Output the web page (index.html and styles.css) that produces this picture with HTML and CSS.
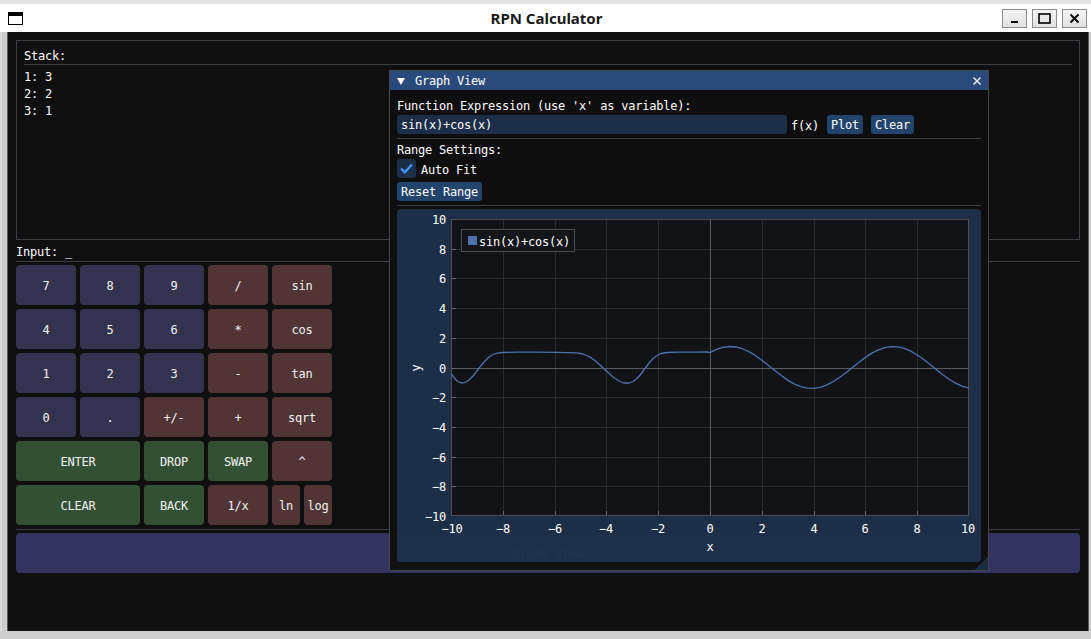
FILE: index.html
```html
<!DOCTYPE html>
<html>
<head>
<meta charset="utf-8">
<title>RPN Calculator</title>
<link rel="stylesheet" href="styles.css">
</head>
<body>
<div class="os-top"></div>
<header class="titlebar">
  <div class="tb-left">
    <svg class="app-icon" width="15" height="13" viewBox="0 0 15 13"><rect x="0.5" y="0.5" width="14" height="12" fill="#fff" stroke="#000"/><rect x="0" y="0" width="15" height="4" fill="#000"/></svg>
  </div>
  <div class="tb-title">RPN Calculator</div>
  <div class="tb-right">
    <span class="wbtn"><svg width="11" height="11" viewBox="0 0 11 11"><rect x="2" y="8" width="7" height="2" fill="#000"/></svg></span>
    <span class="wbtn"><svg width="13" height="11" viewBox="0 0 13 11"><rect x="1" y="1" width="11" height="9" fill="none" stroke="#000" stroke-width="1.6"/></svg></span>
    <span class="wbtn"><svg width="11" height="11" viewBox="0 0 11 11"><path d="M1.5 1.5 L9.5 9.5 M9.5 1.5 L1.5 9.5" stroke="#000" stroke-width="1.8"/></svg></span>
  </div>
</header>
<div class="desk">
  <div class="side-l"></div>
  <main class="app">
    <section class="stack-box">
      <div class="line">Stack:</div>
      <div class="sep sep-stack"></div>
      <div class="line">1: 3</div>
      <div class="line">2: 2</div>
      <div class="line">3: 1</div>
    </section>
    <div class="line input-line">Input: _</div>
    <div class="sep sep-input"></div>
    <div class="keypad">
      <span class="key num">7</span>
      <span class="key num">8</span>
      <span class="key num">9</span>
      <span class="key op">/</span>
      <span class="key op">sin</span>
      <span class="key num">4</span>
      <span class="key num">5</span>
      <span class="key num">6</span>
      <span class="key op">*</span>
      <span class="key op">cos</span>
      <span class="key num">1</span>
      <span class="key num">2</span>
      <span class="key num">3</span>
      <span class="key op">-</span>
      <span class="key op">tan</span>
      <span class="key num">0</span>
      <span class="key num">.</span>
      <span class="key op">+/-</span>
      <span class="key op">+</span>
      <span class="key op">sqrt</span>
      <span class="key cmd wide">ENTER</span>
      <span class="key cmd">DROP</span>
      <span class="key cmd">SWAP</span>
      <span class="key op">^</span>
      <span class="key cmd wide">CLEAR</span>
      <span class="key cmd">BACK</span>
      <span class="key op">1/x</span>
      <span class="key-pair"><span class="key op">ln</span><span class="key op">log</span></span>
    </div>
    <div class="sep sep-keys"></div>
    <div class="graph-btn">Graph View</div>
  </main>
  <div class="side-r"></div>
</div>
<div class="os-bottom"></div>

<div class="gwin">
  <div class="gw-title">
    <svg class="gw-tri" width="8" height="7" viewBox="0 0 8 7"><polygon points="0,0 8,0 4,7" fill="#fff"/></svg>
    <span class="gw-name">Graph View</span>
    <svg class="gw-close" width="8" height="8" viewBox="0 0 8 8"><path d="M0.5 0.5 L7.5 7.5 M7.5 0.5 L0.5 7.5" stroke="#fff" stroke-width="1.2"/></svg>
  </div>
  <div class="gw-body">
    <div class="line">Function Expression (use 'x' as variable):</div>
    <div class="row row-expr">
      <div class="field">sin(x)+cos(x)</div>
      <span class="flabel">f(x)</span>
      <span class="ibtn">Plot</span>
      <span class="ibtn">Clear</span>
    </div>
    <div class="sep sep-a"></div>
    <div class="line">Range Settings:</div>
    <div class="row row-check">
      <span class="check"><svg width="19" height="19" viewBox="0 0 19 19"><path d="M4 9.5 L7.8 13.3 L15 5.5" fill="none" stroke="#4296fa" stroke-width="2.4"/></svg></span>
      <span class="clabel">Auto Fit</span>
    </div>
    <div class="row row-reset"><span class="ibtn">Reset Range</span></div>
    <div class="sep sep-b"></div>
    <div class="plot-frame">
      <svg class="plot" width="584" height="353" viewBox="0 0 584 353">
        <rect x="54" y="10" width="518" height="297" fill="#121316"/>
        <g stroke="#2a2b2f" stroke-width="1">
          <path d="M106.5 10V307 M158.5 10V307 M209.5 10V307 M261.5 10V307 M365.5 10V307 M417.5 10V307 M468.5 10V307 M520.5 10V307"/>
          <path d="M54 40.5H572 M54 69.5H572 M54 99.5H572 M54 129.5H572 M54 188.5H572 M54 218.5H572 M54 248.5H572 M54 277.5H572"/>
        </g>
        <g stroke="#5a5b60" stroke-width="1">
          <path d="M313.5 10V307 M54 159.5H572"/>
        </g>
        <g stroke="#6a6b72" stroke-width="1">
          <path d="M54 10.5h5 M54 40.5h5 M54 69.5h5 M54 99.5h5 M54 129.5h5 M54 159.5h5 M54 188.5h5 M54 218.5h5 M54 248.5h5 M54 277.5h5 M54 306.5h5"/>
          <path d="M54.5 307v-5 M106.5 307v-5 M158.5 307v-5 M209.5 307v-5 M261.5 307v-5 M313.5 307v-5 M365.5 307v-5 M417.5 307v-5 M468.5 307v-5 M520.5 307v-5 M571.5 307v-5"/>
        </g>
        <rect x="54.5" y="10.5" width="517" height="296" fill="none" stroke="#4c4d55"/>
        <path class="curve" d="M54 164.5 L57 168.5 L60 172 L63 173.5 L66 174 L69 173 L72 171 L76 167 L80 162 L84 156.5 L88 152 L92 148 L96 145.5 L100 144.2 L106 143.5 L120 143.2 L140 143.2 L160 143.3 L180 143.8 L186 145 L192 147.5 L198 151.5 L204 157 L210 162.5 L216 168 L222 172 L227 174 L232 174 L236 172.5 L240 169.5 L244 165 L248 159.5 L252 154 L256 149.5 L260 146.5 L264 144.5 L270 143.5 L280 143.2 L300 143.2 L310 143 L313 143.65 L319.48 140.44 L325.95 138.35 L332.43 137.51 L338.9 137.98 L345.38 139.73 L351.85 142.64 L358.33 146.53 L364.8 151.18 L371.28 156.27 L377.75 161.51 L384.23 166.56 L390.7 171.11 L397.18 174.87 L403.65 177.62 L410.13 179.17 L416.6 179.44 L423.08 178.41 L429.55 176.15 L436.03 172.78 L442.5 168.53 L448.98 163.65 L455.45 158.45 L461.93 153.26 L468.4 148.39 L474.88 144.15 L481.35 140.8 L487.83 138.56 L494.3 137.55 L500.78 137.84 L507.25 139.42 L513.73 142.18 L520.2 145.97 L526.68 150.52 L533.15 155.58 L539.63 160.83 L546.1 165.91 L552.58 170.53 L559.05 174.43 L565.53 177.32 L572 179.04"/>
        <rect x="64.5" y="20.5" width="113" height="22" fill="#141518" stroke="#4c4d55"/>
        <rect x="71" y="27" width="9" height="9" fill="#4c72b0"/>
        <text class="lg" x="82" y="37">sin(x)+cos(x)</text>
        <g class="ylab">
          <text x="49" y="15">10</text>
          <text x="49" y="45">8</text>
          <text x="49" y="74">6</text>
          <text x="49" y="104">4</text>
          <text x="49" y="134">2</text>
          <text x="49" y="164">0</text>
          <text x="49" y="193">−2</text>
          <text x="49" y="223">−4</text>
          <text x="49" y="253">−6</text>
          <text x="49" y="282">−8</text>
          <text x="49" y="312">−10</text>
        </g>
        <g class="xlab">
          <text x="55" y="324">−10</text>
          <text x="106" y="324">−8</text>
          <text x="158" y="324">−6</text>
          <text x="209" y="324">−4</text>
          <text x="261" y="324">−2</text>
          <text x="313" y="324">0</text>
          <text x="365" y="324">2</text>
          <text x="417" y="324">4</text>
          <text x="468" y="324">6</text>
          <text x="520" y="324">8</text>
          <text x="571" y="324">10</text>
          <text x="313" y="342">x</text>
        </g>
        <text class="yaxis" transform="translate(23 159) rotate(-90)">y</text>
      </svg>
    </div>
  </div>
  <div class="grip"></div>
</div>
</body>
</html>
```

FILE: styles.css
```css
* { box-sizing: border-box; }

body {
  margin: 0;
  width: 1091px;
  height: 639px;
  overflow: hidden;
  background: #d3d3d3;
  font-family: "DejaVu Sans Mono", "Liberation Mono", monospace;
  font-size: 12px;
  letter-spacing: -0.22px;
  color: #ffffff;
  position: relative;
}

.os-top {
  height: 4px;
  background: #e3e3e3;
}

.titlebar {
  height: 28px;
  background: #ffffff;
  display: grid;
  grid-template-columns: 1fr auto 1fr;
  align-items: center;
  color: #111;
}

.tb-left {
  padding-left: 8px;
  display: flex;
  align-items: center;
}

.app-icon { display: block; margin-top: 1px; }

.tb-title {
  font-family: "Noto Sans", "Open Sans", sans-serif;
  font-weight: 700;
  font-size: 15px;
  letter-spacing: 0;
  color: #1a1a1a;
  padding-left: 2px;
}

.tb-right {
  display: flex;
  justify-content: flex-end;
  gap: 5px;
  padding-right: 4px;
}

.wbtn {
  width: 25px;
  height: 19px;
  border: 1px solid #8c8c8c;
  background: linear-gradient(#f4f4f4, #e0e0e0);
  display: flex;
  align-items: center;
  justify-content: center;
}

.wbtn svg { display: block; }

.desk {
  display: flex;
  height: 599px;
}

.side-l {
  width: 8px;
  background: linear-gradient(90deg, #dcdcdc 0, #dcdcdc 2px, #c9c9c9 2px, #cfcfcf 7px, #5a5a5a 7px);
}

.side-r {
  width: 3px;
  background: linear-gradient(90deg, #5a5a5a 0, #5a5a5a 1px, #cccccc 1px);
}

.app {
  width: 1080px;
  background: #0f0f0f;
  padding: 8px 8px 0 8px;
  display: flex;
  flex-direction: column;
}

.line {
  height: 13px;
  line-height: 16px;
  white-space: pre;
}

.sep {
  height: 1px;
  background: #3e3e47;
}

.stack-box {
  height: 200px;
  border: 1px solid #3e3e47;
  padding: 7px 7px;
  display: flex;
  flex-direction: column;
  gap: 4px;
}

.sep-stack { margin: -1px 0 0 0; }

.input-line { margin-top: 4px; }
.sep-input { margin: 4px 0 3px; }

.keypad {
  display: grid;
  grid-template-columns: repeat(5, 60px);
  grid-auto-rows: 40px;
  gap: 4px;
}

.key {
  display: flex;
  align-items: center;
  justify-content: center;
  padding-top: 2px;
  border-radius: 4px;
  color: #f2f2f2;
  white-space: pre;
}

.key.num { background: #333350; }
.key.op { background: #503436; }
.key.cmd { background: #345034; }
.key.wide { grid-column: span 2; }

.key-pair {
  display: flex;
  gap: 4px;
}

.key-pair .key { flex: 1; }

.sep-keys { margin: 4px 0 3px; }

.graph-btn {
  height: 40px;
  border-radius: 4px;
  background: #343360;
  display: flex;
  align-items: center;
  justify-content: center;
  padding-top: 2px;
}

.os-bottom {
  height: 8px;
  background: #cdcdcd;
}

/* Floating Graph View window */
.gwin {
  position: absolute;
  left: 389px;
  top: 70px;
  width: 600px;
  height: 501px;
  border: 1px solid #46464f;
  background: rgba(15, 15, 15, 0.94);
  display: flex;
  flex-direction: column;
}

.gw-title {
  height: 19px;
  background: #294a7a;
  display: flex;
  align-items: center;
  padding: 0 7px 0 7px;
}

.gw-tri { display: block; margin-top: 1px; }

.gw-name {
  margin-left: 10px;
  flex: 1;
}

.gw-close { display: block; }

.gw-body {
  padding: 8px 7px 0 7px;
  display: flex;
  flex-direction: column;
}

.row {
  display: flex;
  align-items: center;
  height: 19px;
}

.row-expr { margin-top: 4px; }

.field {
  width: 390px;
  height: 19px;
  line-height: 21px;
  padding-left: 4px;
  border-radius: 3px;
  background: rgba(41, 74, 122, 0.54);
}

.flabel { margin-left: 4px; padding-top: 2px; }

.ibtn {
  height: 19px;
  line-height: 21px;
  padding: 0 4px;
  border-radius: 3px;
  background: rgba(66, 150, 250, 0.40);
  margin-left: 8px;
}

.row-reset .ibtn { margin-left: 0; }

.sep-a { margin: 4px 0 3px; }

.row-check { margin-top: 4px; }

.check {
  width: 19px;
  height: 19px;
  border-radius: 3px;
  background: rgba(41, 74, 122, 0.54);
}

.check svg { display: block; }

.clabel { margin-left: 5px; padding-top: 2px; }

.row-reset { margin-top: 4px; }

.sep-b { margin: 4px 0 3px; }

.plot-frame {
  width: 584px;
  height: 353px;
  border-radius: 4px;
  background: rgba(41, 74, 122, 0.54);
}

.plot { display: block; }

.plot text {
  font-family: "DejaVu Sans Mono", "Liberation Mono", monospace;
  font-size: 12px;
  letter-spacing: -0.22px;
  fill: #ffffff;
}

.plot .ylab text { text-anchor: end; }
.plot .xlab text { text-anchor: middle; }
.plot .yaxis { text-anchor: middle; }

.curve {
  fill: none;
  stroke: #4c72b0;
  stroke-width: 1.3;
  stroke-linejoin: round;
}

.grip {
  position: absolute;
  right: 0;
  bottom: 0;
  width: 14px;
  height: 14px;
  background: linear-gradient(135deg, transparent 50%, rgba(66, 150, 250, 0.2) 50%);
}
```
